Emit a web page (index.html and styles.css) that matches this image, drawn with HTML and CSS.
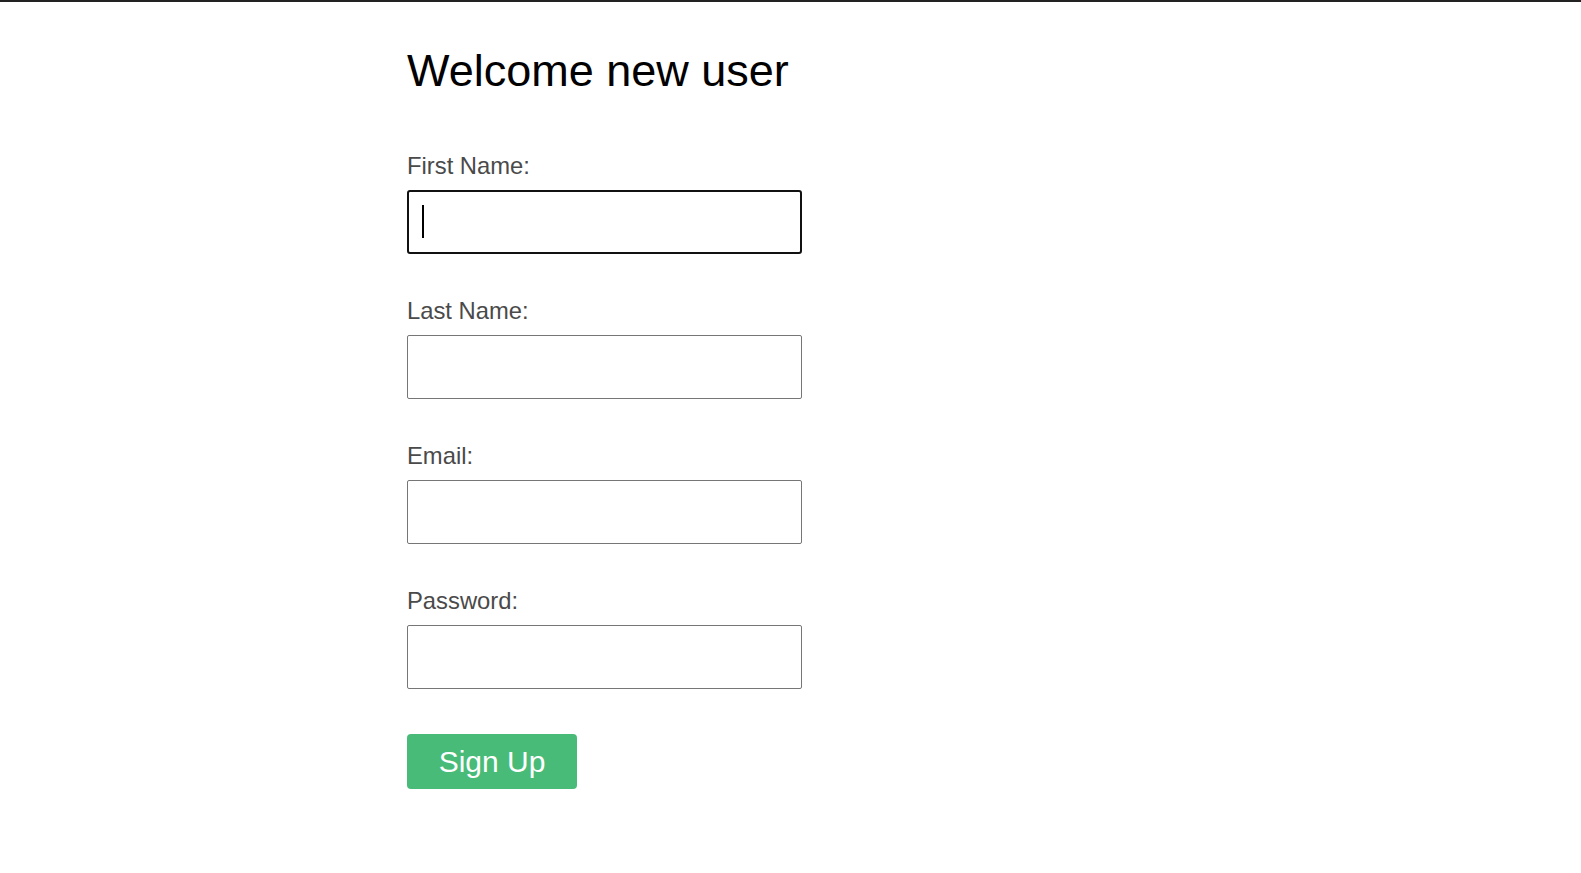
FILE: index.html
```html
<!DOCTYPE html>
<html lang="en">
<head>
<meta charset="utf-8">
<title>Sign up</title>
<link rel="stylesheet" href="styles.css">
</head>
<body>
<main class="page">
  <h1 class="title">Welcome new user</h1>
  <form class="form">
    <div class="field">
      <label class="label" for="first">First Name:</label>
      <div class="input-wrap">
        <input class="input input--focused" id="first" type="text">
        <span class="caret"></span>
      </div>
    </div>
    <div class="field">
      <label class="label" for="last">Last Name:</label>
      <div class="input-wrap">
        <input class="input" id="last" type="text">
      </div>
    </div>
    <div class="field">
      <label class="label" for="email">Email:</label>
      <div class="input-wrap">
        <input class="input" id="email" type="email">
      </div>
    </div>
    <div class="field field--last">
      <label class="label" for="password">Password:</label>
      <div class="input-wrap">
        <input class="input" id="password" type="password">
      </div>
    </div>
    <button class="button" type="button">Sign Up</button>
  </form>
</main>
</body>
</html>
```
FILE: styles.css
```css
html, body {
  margin: 0;
  padding: 0;
  background: #ffffff;
}

body {
  border-top: 2px solid #222222;
  font-family: "Liberation Sans", Arial, sans-serif;
}

.page {
  padding: 45px 0 0 407px;
}

.title {
  margin: 0;
  font-size: 45px;
  line-height: 48px;
  font-weight: 400;
  color: #000000;
}

.form {
  display: flex;
  flex-direction: column;
  align-items: flex-start;
  margin-top: 58px;
}

.field {
  display: flex;
  flex-direction: column;
  margin-bottom: 44px;
}

.field--last {
  margin-bottom: 45px;
}

.label {
  font-size: 23.8px;
  line-height: 26px;
  color: #4a4a4a;
  margin-bottom: 11px;
}

.input-wrap {
  position: relative;
}

.input {
  box-sizing: border-box;
  display: block;
  width: 395px;
  height: 64px;
  margin: 0;
  padding: 0 14px;
  border: 1px solid #767676;
  border-radius: 2px;
  background: #ffffff;
  font-family: "Liberation Sans", Arial, sans-serif;
  font-size: 28px;
  outline: none;
}

.input--focused {
  border: 2px solid #111111;
  border-radius: 3px;
}

.caret {
  position: absolute;
  left: 15px;
  top: 15px;
  width: 2px;
  height: 33px;
  background: #000000;
}

.button {
  width: 170px;
  height: 55px;
  margin: 0;
  padding: 0;
  border: none;
  border-radius: 4px;
  background: #48bb78;
  color: #ffffff;
  font-family: "Liberation Sans", Arial, sans-serif;
  font-size: 30px;
  line-height: 55px;
  cursor: pointer;
}
```
